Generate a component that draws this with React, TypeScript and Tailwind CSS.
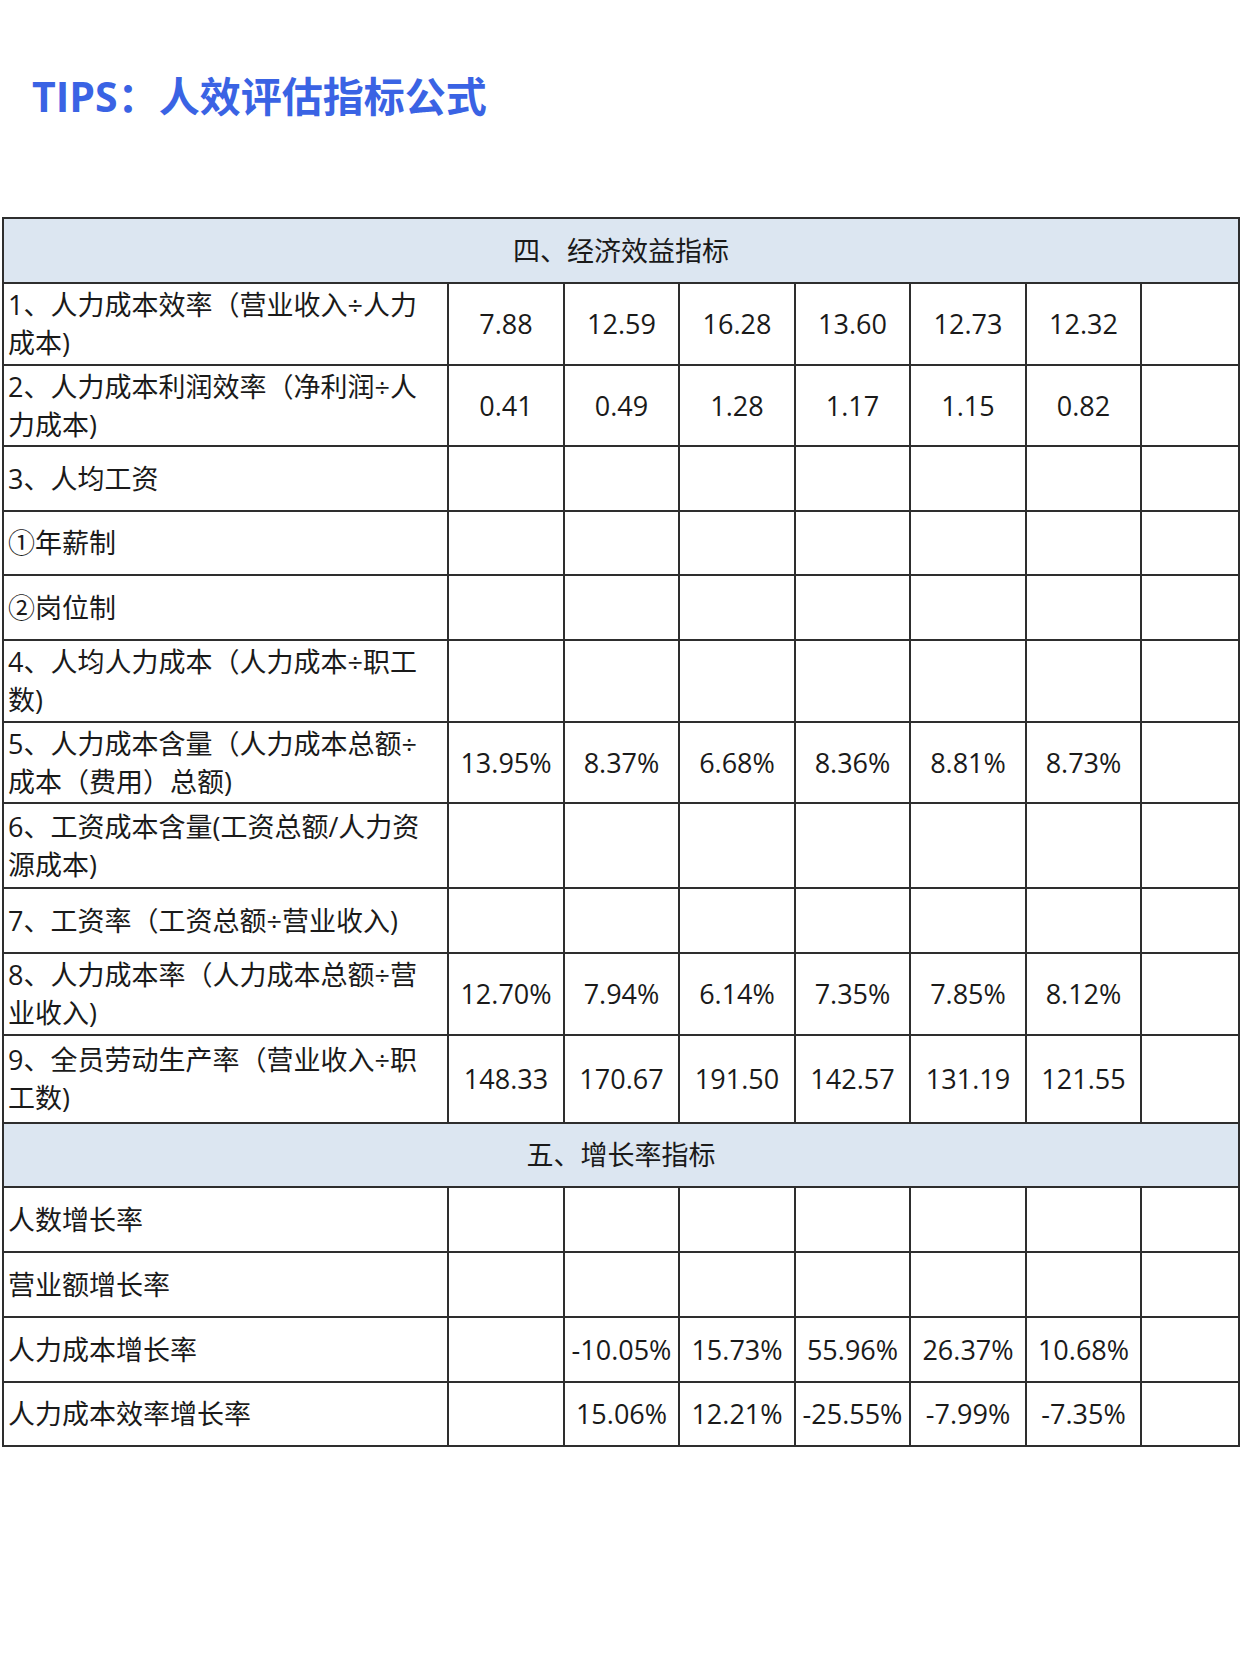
import React from "react";

type Row = {
  label: React.ReactNode;
  values: string[];
  h: string;
};

const font = {
  fontFamily: '"Open Sans", "Noto Sans CJK SC", sans-serif',
};

const econRows: Row[] = [
  {
    label: (
      <>
        1、人力成本效率（营业收入÷人力
        <br />
        成本)
      </>
    ),
    values: ["7.88", "12.59", "16.28", "13.60", "12.73", "12.32"],
    h: "h-[82px]",
  },
  {
    label: (
      <>
        2、人力成本利润效率（净利润÷人
        <br />
        力成本)
      </>
    ),
    values: ["0.41", "0.49", "1.28", "1.17", "1.15", "0.82"],
    h: "h-[81px]",
  },
  { label: "3、人均工资", values: [], h: "h-[65px]" },
  { label: "①年薪制", values: [], h: "h-[64px]" },
  { label: "②岗位制", values: [], h: "h-[65px]" },
  {
    label: (
      <>
        4、人均人力成本（人力成本÷职工
        <br />
        数)
      </>
    ),
    values: [],
    h: "h-[82px]",
  },
  {
    label: (
      <>
        5、人力成本含量（人力成本总额÷
        <br />
        成本（费用）总额)
      </>
    ),
    values: ["13.95%", "8.37%", "6.68%", "8.36%", "8.81%", "8.73%"],
    h: "h-[81px]",
  },
  {
    label: (
      <>
        6、工资成本含量(工资总额/人力资
        <br />
        源成本)
      </>
    ),
    values: [],
    h: "h-[85px]",
  },
  { label: "7、工资率（工资总额÷营业收入)", values: [], h: "h-[65px]" },
  {
    label: (
      <>
        8、人力成本率（人力成本总额÷营
        <br />
        业收入)
      </>
    ),
    values: ["12.70%", "7.94%", "6.14%", "7.35%", "7.85%", "8.12%"],
    h: "h-[82px]",
  },
  {
    label: (
      <>
        9、全员劳动生产率（营业收入÷职
        <br />
        工数)
      </>
    ),
    values: ["148.33", "170.67", "191.50", "142.57", "131.19", "121.55"],
    h: "h-[88px]",
  },
];

const growthRows: Row[] = [
  { label: "人数增长率", values: [], h: "h-[65px]" },
  { label: "营业额增长率", values: [], h: "h-[65px]" },
  {
    label: "人力成本增长率",
    values: ["", "-10.05%", "15.73%", "55.96%", "26.37%", "10.68%"],
    h: "h-[65px]",
  },
  {
    label: "人力成本效率增长率",
    values: ["", "15.06%", "12.21%", "-25.55%", "-7.99%", "-7.35%"],
    h: "h-[64px]",
  },
];

const cell = "border-2 border-[#2e2e2e] p-0";

function SectionHeader({ title, h }: { title: string; h: string }) {
  return (
    <tr className={h}>
      <td colSpan={8} className={`${cell} bg-[#dce6f1] text-center`}>
        {title}
      </td>
    </tr>
  );
}

function DataRow({ row }: { row: Row }) {
  return (
    <tr className={row.h}>
      <td className={`${cell} pl-[4px] text-left align-middle whitespace-nowrap`}>
        {row.label}
      </td>
      {Array.from({ length: 6 }).map((_, i) => (
        <td key={i} className={`${cell} text-center align-middle whitespace-nowrap`}>
          {row.values[i] || ""}
        </td>
      ))}
      <td className={cell}></td>
    </tr>
  );
}

export default function App() {
  return (
    <div className="min-h-[1660px] w-[1245px] bg-white" style={font}>
      <h1 className="pl-[32px] pt-[72px] text-[41px] font-bold leading-[48px] text-[#3a63e4]">
        TIPS：人效评估指标公式
      </h1>

      <table className="ml-[2px] mt-[97px] w-[1236px] table-fixed border-collapse text-[27px] leading-[38px] text-[#1a1a1a]">
        <colgroup>
          <col className="w-[445px]" />
          <col className="w-[116px]" />
          <col className="w-[115px]" />
          <col className="w-[116px]" />
          <col className="w-[115px]" />
          <col className="w-[116px]" />
          <col className="w-[115px]" />
          <col className="w-[98px]" />
        </colgroup>
        <tbody>
          <SectionHeader title="四、经济效益指标" h="h-[65px]" />
          {econRows.map((r, i) => (
            <DataRow key={i} row={r} />
          ))}
          <SectionHeader title="五、增长率指标" h="h-[64px]" />
          {growthRows.map((r, i) => (
            <DataRow key={i} row={r} />
          ))}
        </tbody>
      </table>
    </div>
  );
}
